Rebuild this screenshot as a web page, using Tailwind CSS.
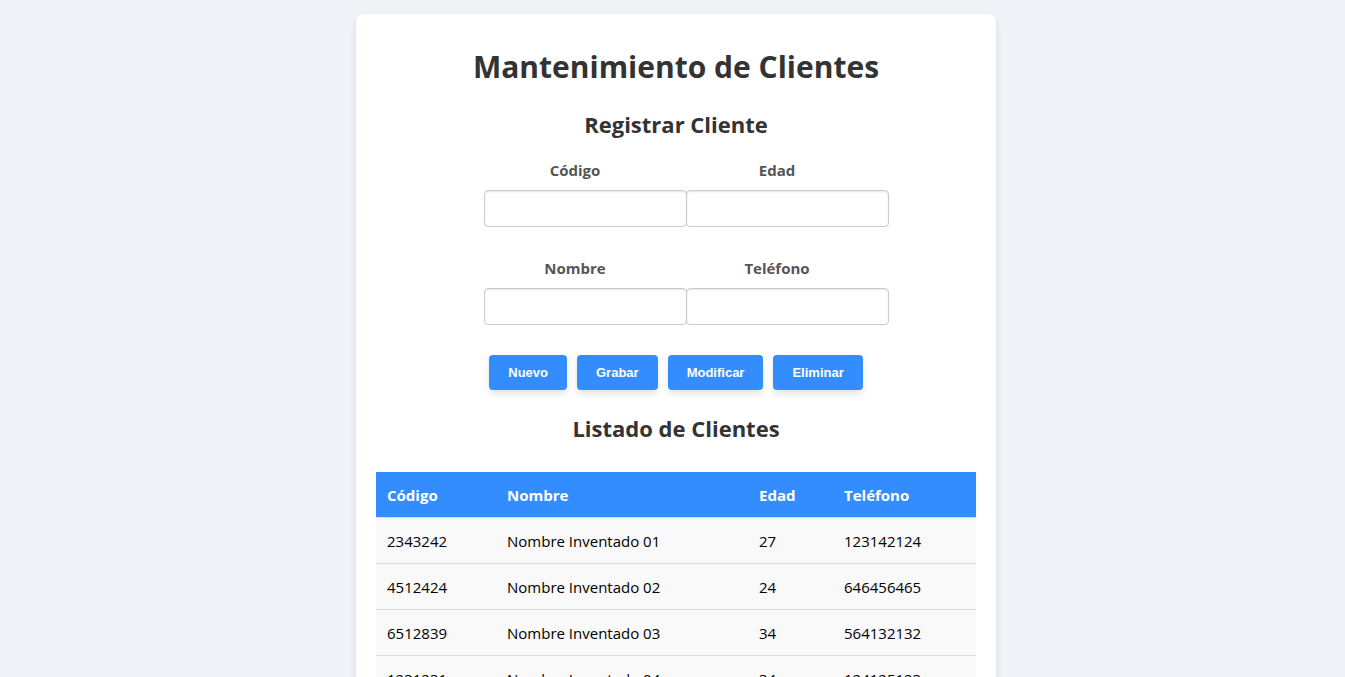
<!DOCTYPE html>
<html lang="es">
<head>
<meta charset="utf-8">
<meta name="viewport" content="width=device-width, initial-scale=1">
<title>Mantenimiento de Clientes</title>
<script src="https://cdn.jsdelivr.net/npm/@tailwindcss/browser@4"></script>
</head>
<body class="min-h-screen bg-[#f0f4f8] pt-[14px] pl-[7px] font-['Segoe_UI','Open_Sans',sans-serif] text-[15px] leading-5 text-black">
<main class="mx-auto max-w-[640px] rounded-lg bg-white p-5 shadow-[0_4px_8px_rgba(0,0,0,0.1)]">
  <h1 class="mt-3 text-center text-[30px] leading-[42px] font-bold text-[#333]">Mantenimiento de Clientes</h1>
  <h2 class="mt-5 text-center text-[22px] leading-8 font-bold text-[#333]">Registrar Cliente</h2>
  <form>
    <div class="mx-auto mt-5 grid w-fit grid-cols-[202px_202px] gap-y-[31px] pl-5">
      <div>
        <label for="codigo" class="block pr-5 text-center font-bold text-[#555]">Código</label>
        <input id="codigo" type="text" class="mt-[10px] block h-[37px] w-[203px] rounded border border-[#ccc] px-2 shadow-[inset_0_1px_2px_rgba(0,0,0,0.1)]">
      </div>
      <div>
        <label for="edad" class="block pr-5 text-center font-bold text-[#555]">Edad</label>
        <input id="edad" type="text" class="mt-[10px] block h-[37px] w-[203px] rounded border border-[#ccc] px-2 shadow-[inset_0_1px_2px_rgba(0,0,0,0.1)]">
      </div>
      <div>
        <label for="nombre" class="block pr-5 text-center font-bold text-[#555]">Nombre</label>
        <input id="nombre" type="text" class="mt-[10px] block h-[37px] w-[203px] rounded border border-[#ccc] px-2 shadow-[inset_0_1px_2px_rgba(0,0,0,0.1)]">
      </div>
      <div>
        <label for="telefono" class="block pr-5 text-center font-bold text-[#555]">Teléfono</label>
        <input id="telefono" type="text" class="mt-[10px] block h-[37px] w-[203px] rounded border border-[#ccc] px-2 shadow-[inset_0_1px_2px_rgba(0,0,0,0.1)]">
      </div>
    </div>
    <div class="mt-[30px] flex justify-center gap-[10px] font-['Liberation_Sans',Arial,sans-serif] text-[13px] leading-[15px] font-bold text-white">
      <button type="button" class="rounded bg-[#338dff] px-[19px] py-[10px] shadow-[0_4px_6px_rgba(0,0,0,0.1)]">Nuevo</button>
      <button type="button" class="rounded bg-[#338dff] px-[19px] py-[10px] shadow-[0_4px_6px_rgba(0,0,0,0.1)]">Grabar</button>
      <button type="button" class="rounded bg-[#338dff] px-[19px] py-[10px] shadow-[0_4px_6px_rgba(0,0,0,0.1)]">Modificar</button>
      <button type="button" class="rounded bg-[#338dff] px-[19px] py-[10px] shadow-[0_4px_6px_rgba(0,0,0,0.1)]">Eliminar</button>
    </div>
  </form>
  <h2 class="mt-[22px] text-center text-[22px] leading-8 font-bold text-[#333]">Listado de Clientes</h2>
  <table class="mt-7 w-full border-collapse text-left">
    <colgroup><col class="w-[20%]"><col class="w-[42%]"><col class="w-[14%]"><col></colgroup>
    <thead class="bg-[#338dff] text-white">
      <tr class="h-[45px] border-b border-[#ddd]"><th class="px-[11px] pt-px">Código</th><th class="px-[11px] pt-px">Nombre</th><th class="px-[11px] pt-px">Edad</th><th class="px-3 pt-px">Teléfono</th></tr>
    </thead>
    <tbody class="bg-[#f9f9f9]">
      <tr class="h-[46px] border-b border-[#ddd]"><td class="px-[11px] pt-px">2343242</td><td class="px-[11px] pt-px">Nombre Inventado 01</td><td class="px-[11px] pt-px">27</td><td class="px-3 pt-px">123142124</td></tr>
      <tr class="h-[46px] border-b border-[#ddd]"><td class="px-[11px] pt-px">4512424</td><td class="px-[11px] pt-px">Nombre Inventado 02</td><td class="px-[11px] pt-px">24</td><td class="px-3 pt-px">646456465</td></tr>
      <tr class="h-[46px] border-b border-[#ddd]"><td class="px-[11px] pt-px">6512839</td><td class="px-[11px] pt-px">Nombre Inventado 03</td><td class="px-[11px] pt-px">34</td><td class="px-3 pt-px">564132132</td></tr>
      <tr class="h-[46px] border-b border-[#ddd]"><td class="px-[11px] pt-px">1231231</td><td class="px-[11px] pt-px">Nombre Inventado 04</td><td class="px-[11px] pt-px">34</td><td class="px-3 pt-px">124125123</td></tr>
    </tbody>
  </table>
</main>
</body>
</html>
